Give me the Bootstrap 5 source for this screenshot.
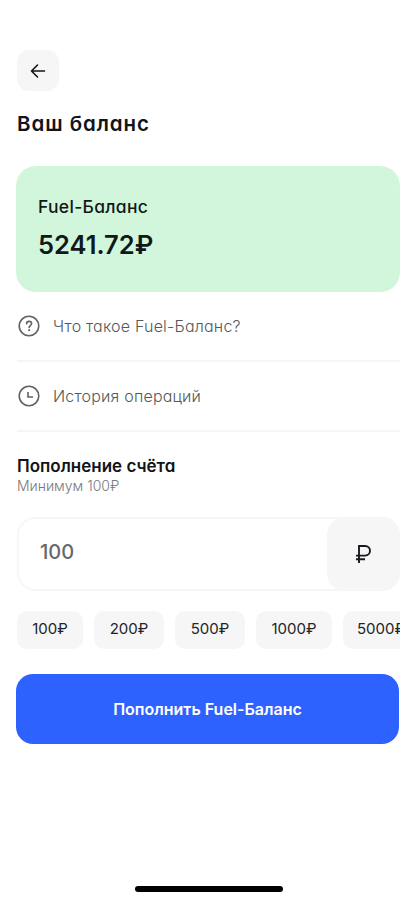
<!DOCTYPE html>
<html lang="ru">
<head>
<meta charset="utf-8">
<meta name="viewport" content="width=device-width, initial-scale=1">
<title>Ваш баланс</title>
<link href="https://cdn.jsdelivr.net/npm/bootstrap@5.3.0/dist/css/bootstrap.min.css" rel="stylesheet">
<style>
body{font-family:Inter,"Noto Sans",sans-serif;font-feature-settings:"cv11","ss03";color:#121417;background:#fff;line-height:1}
.screen{height:900px;padding:50px 15px 8px 17px;overflow:hidden}
.back{width:42px;height:41px;border-radius:12px;background:#f6f6f6;border:0}
.title{font-size:20.5px;line-height:24px;margin:21px 0 30px;font-weight:600;letter-spacing:.95px}
.balance{height:126px;margin-left:-1px;padding:30px 22px;border:0;border-radius:20px;background:#d2f6dc;color:#10181a}
.balance-name{font-size:17.5px;line-height:22px;font-weight:500;letter-spacing:.3px}
.balance-sum{font-size:25.5px;line-height:30px;font-weight:600;margin-top:12px}
.link-row{height:70px;border-bottom:2px solid #f5f5f5;color:#55585b;font-size:16px;font-weight:300;text-decoration:none;letter-spacing:.2px}
.link-row svg{margin:0 13px 0 1px}
.section-title{font-size:17px;line-height:20px;font-weight:600;margin:24px 0 0}
.hint{font-size:14px;line-height:18px;font-weight:300;color:#77797c;margin:1px 0 0}
.amount{height:74px;margin-top:22px;border:2px solid #f7f7f7;border-radius:18px}
.amount input{font-size:20px;font-weight:500;color:#66686b;padding:0 0 4px 21px;border:0;background:none;height:70px}
.currency{width:73px;margin:-2px;border-radius:18px;background:#f6f6f6}
.chips{margin-top:20px;gap:11px}
.chip{height:38px;border:0;border-radius:10px;background:#f6f6f6;color:#222427;font-size:15px;padding:0 0 2px;flex:none}
.w66{width:66px}.w71{width:70px}.w76{width:76px}
.pay{height:70px;margin:25px 0 0 -1px;width:383px;border:0;border-radius:17px;background:#2d62ff;color:#fff;font-size:16px;font-weight:600;padding-bottom:7px}
.pay:hover{background:#2457ee;color:#fff}
.home-bar{width:148px;height:6px;border-radius:3px;background:#000}
</style>
<script src="https://cdn.jsdelivr.net/npm/bootstrap@5.3.0/dist/js/bootstrap.bundle.min.js"></script>
</head>
<body>
<main class="screen d-flex flex-column">
  <button class="back btn p-0 d-flex align-items-center justify-content-center flex-shrink-0" aria-label="Назад">
    <svg width="16" height="16" viewBox="0 0 16 16" fill="none" stroke="#121417" stroke-width="1.6" stroke-linecap="round" stroke-linejoin="round"><path d="M14.5 8H1.5M7.5 2L1.5 8l6 6"/></svg>
  </button>
  <h1 class="title"><span>Ваш баланс</span></h1>
  <section class="card balance flex-shrink-0">
    <div class="balance-name"><span>Fuel-Баланс</span></div>
    <div class="balance-sum"><span>5241.72₽</span></div>
  </section>
  <a href="#" class="link-row d-flex align-items-center flex-shrink-0">
    <svg width="22" height="22" viewBox="0 0 22 22" fill="none" stroke="#606265" stroke-width="1.6" stroke-linecap="round"><circle cx="11" cy="11" r="9.8"/><path d="M8.6 8.7c0-1.5 1-2.3 2.5-2.3s2.5.9 2.5 2.2c0 2-2.5 1.9-2.5 3.8"/><path d="M11.1 15.1v.2" stroke-width="2"/></svg>
    <span>Что такое Fuel-Баланс?</span>
  </a>
  <a href="#" class="link-row d-flex align-items-center flex-shrink-0">
    <svg width="22" height="22" viewBox="0 0 22 22" fill="none" stroke="#606265" stroke-width="1.6"><circle cx="11" cy="11" r="9.8"/><path d="M10 7v5h5"/></svg>
    <span>История операций</span>
  </a>
  <h2 class="section-title"><span>Пополнение счёта</span></h2>
  <p class="hint"><span>Минимум 100₽</span></p>
  <div class="amount d-flex flex-shrink-0">
    <input class="form-control shadow-none" value="100" aria-label="Сумма">
    <div class="currency d-flex align-items-center justify-content-center flex-shrink-0">
      <svg width="17" height="20" viewBox="0 0 17 20" fill="none" stroke="#17191c" stroke-width="1.9"><path d="M4 19V2h6.2a4.6 4.6 0 0 1 0 9.6H1M1 15.2h9"/></svg>
    </div>
  </div>
  <div class="chips d-flex overflow-hidden flex-shrink-0">
    <button class="btn chip w66">100₽</button>
    <button class="btn chip w71">200₽</button>
    <button class="btn chip w71">500₽</button>
    <button class="btn chip w76">1000₽</button>
    <button class="btn chip w76">5000₽</button>
  </div>
  <button class="btn pay flex-shrink-0"><span>Пополнить Fuel-Баланс</span></button>
  <div class="home-bar mt-auto align-self-center"></div>
</main>
</body>
</html>
